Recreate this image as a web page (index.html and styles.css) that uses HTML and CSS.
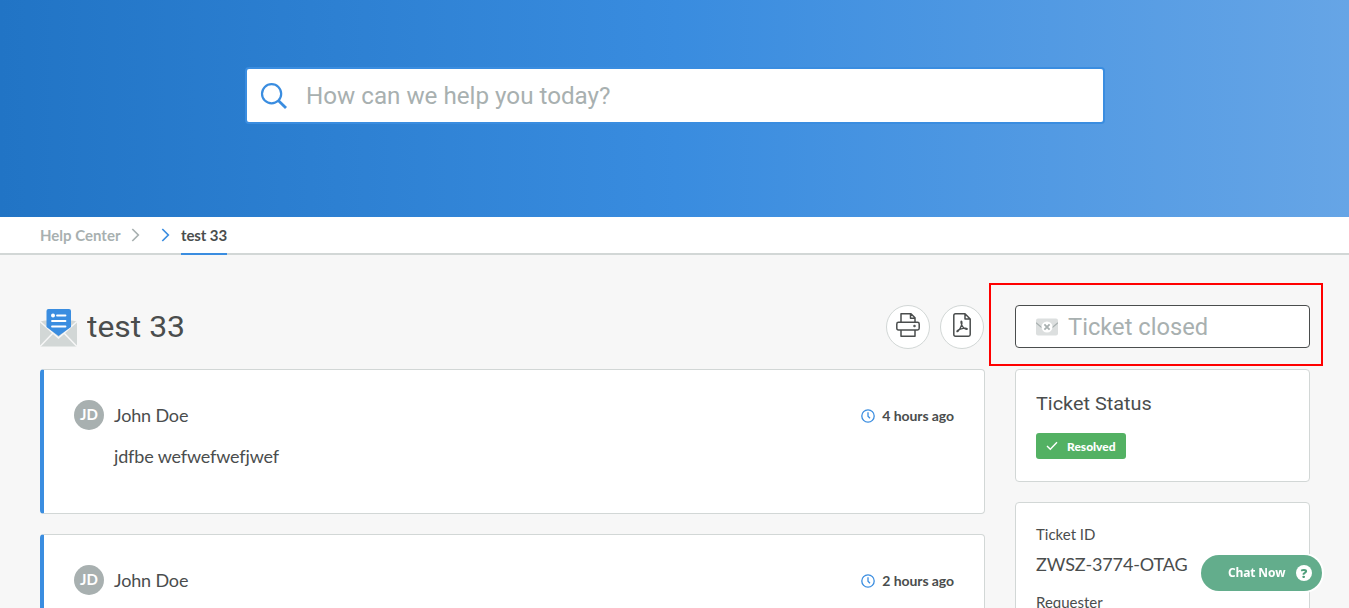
FILE: index.html
```html
<!DOCTYPE html>
<html lang="en">
<head>
<meta charset="utf-8">
<title>test 33 - Help Center</title>
<link rel="stylesheet" href="styles.css">
</head>
<body>
<header class="hero">
  <div class="search">
    <svg class="search-icon" width="28" height="28" viewBox="0 0 28 28" fill="none" stroke="#3a8de0" stroke-width="2.2"><circle cx="11.6" cy="11.7" r="9.6"/><path d="M18.3 18.5L26 26" stroke-width="2.8"/></svg>
    <span class="search-text">How can we help you today?</span>
  </div>
</header>
<nav class="crumbs">
  <a class="crumb">Help Center</a>
  <svg class="chev" width="9" height="14" viewBox="0 0 9 14" fill="none" stroke="#a8b0b0" stroke-width="1.7"><path d="M1.3 1L7.3 7L1.3 13"/></svg>
  <svg class="chev chev-active" width="9" height="14" viewBox="0 0 9 14" fill="none" stroke="#3a8de0" stroke-width="1.7"><path d="M1.3 1L7.3 7L1.3 13"/></svg>
  <a class="crumb current">test 33</a>
</nav>
<main class="content">
  <section class="thread">
    <div class="title-row">
      <svg class="mail" width="37" height="38" viewBox="0 0 37 38"><path fill="#d2d7d6" d="M0 12.5L5 11.5H32L37 12.5V37.5H0Z"/><path d="M0 12.5L18.5 29L37 12.5M0 37.5L13 24M37 37.5L24 24" fill="none" stroke="#f7f7f7" stroke-width="1.5"/><path fill="#3a8de0" d="M6.5 2Q6.5 0 8.5 0H29Q31 0 31 2V18L18.5 27L6.5 18Z"/><circle cx="13" cy="6.5" r="2" fill="#fff"/><path d="M17 6.5H25.5M12 12H25.5M12 17.5H25.5" stroke="#fff" stroke-width="1.8" stroke-linecap="round"/></svg>
      <h1 class="title">test 33</h1>
      <a class="round"><svg width="24" height="24" viewBox="0 0 24 24" fill="none" stroke="#4a4d4d" stroke-width="1.5" stroke-linejoin="round"><path d="M5 9V.8H15L19 4.8V9M14.5 1V5.2H19M5 17H2.5Q.8 17 .8 15.3V11Q.8 9.3 2.5 9.3H21.5Q23.2 9.3 23.2 11V15.3Q23.2 17 21.5 17H19M5 17V23.2H19V17M5 17H19"/><circle cx="18.5" cy="13" r=".5"/></svg></a>
      <a class="round"><svg width="18" height="24" viewBox="0 0 18 24" fill="none" stroke="#4a4d4d" stroke-width="1.5" stroke-linejoin="round" stroke-linecap="round"><path d="M2.5.8H12L17.2 6V21.5Q17.2 23.2 15.5 23.2H2.5Q.8 23.2.8 21.5V2.5Q.8.8 2.5.8ZM12 1V6H17"/><path stroke-width="1.3" d="M8.3 8.2C9.7 8.6 8.8 12 7.5 14.5C6 17.5 4.2 19.5 3.9 18.4C3.6 17.3 7.5 15.8 10.5 15.4C13 15 14.6 15.4 14.2 16.1C13.5 17 10.5 15.5 9 12.5C8 10.5 7.7 8.5 8.3 8.2Z"/></svg></a>
    </div>
    <article class="card message">
      <div class="avatar">JD</div>
      <div class="body"><div class="name">John Doe</div><p class="text">jdfbe wefwefwefjwef</p></div>
      <div class="time"><svg width="14" height="14" viewBox="0 0 14 14" fill="none" stroke="#3a8de0" stroke-width="1.3"><circle cx="7" cy="7" r="6.2"/><path d="M7 3.3V7.3L9 9.3"/></svg><span>4 hours ago</span></div>
    </article>
    <article class="card message">
      <div class="avatar">JD</div>
      <div class="body"><div class="name">John Doe</div></div>
      <div class="time"><svg width="14" height="14" viewBox="0 0 14 14" fill="none" stroke="#3a8de0" stroke-width="1.3"><circle cx="7" cy="7" r="6.2"/><path d="M7 3.3V7.3L9 9.3"/></svg><span>2 hours ago</span></div>
    </article>
  </section>
  <aside class="side">
    <div class="closed">
      <svg width="22" height="18" viewBox="0 0 22 18"><rect y=".5" width="22" height="17" rx="2" fill="#dcdfdf"/><path d="M0 4.8L6 9.7M22 4.8L16 9.7" stroke="#a8b0b0" stroke-width="1.2"/><circle cx="11" cy="9" r="5.5" fill="#fff"/><path d="M8.4 6.4L13.6 11.6M13.6 6.4L8.4 11.6" stroke="#a8b0b0" stroke-width="1.8"/></svg>
      <span class="closed-text">Ticket closed</span>
      <div class="highlight"></div>
    </div>
    <section class="card status">
      <h2 class="status-title">Ticket Status</h2>
      <span class="badge"><svg width="12" height="10" viewBox="0 0 12 10" fill="none" stroke="#fff" stroke-width="1.4"><path d="M1 5L4.3 8.2L11 1.3"/></svg><span class="badge-text">Resolved</span></span>
    </section>
    <section class="card details">
      <div class="label">Ticket ID</div>
      <div class="value">ZWSZ-3774-OTAG</div>
      <div class="label">Requester</div>
    </section>
  </aside>
</main>
<button class="chat"><span>Chat Now</span><i class="help">?</i></button>
</body>
</html>
```

FILE: styles.css
```css
* { box-sizing: border-box; }
body { margin: 0; height: 608px; overflow: hidden; background: #f7f7f7; color: #4a4d4d; font-family: Lato, sans-serif; }
h1, h2, p { margin: 0; font-weight: 400; }
svg { display: block; flex: none; }
.hero { height: 217px; padding-top: 67px; background: linear-gradient(90deg, #2174c5 0%, #398cdf 50%, #66a5e6 100%); }
.search { width: 860px; height: 57px; margin-left: 245px; padding-left: 13px; display: flex; align-items: center; background: #fff; border: 2px solid #3a8de0; border-radius: 4px; }
.search-text { margin: 2px 0 0 18px; font: 23px/30px Roboto, sans-serif; color: #a8b0b0; white-space: nowrap; transform: scaleX(1.052); transform-origin: left; }
.crumbs { height: 38px; padding-left: 40px; display: flex; align-items: center; background: #fff; border-bottom: 2px solid #d2d7d6; }
.crumb { height: 38px; margin-top: 2px; font-size: 15px; line-height: 36px; font-weight: 700; color: #a8b0b0; white-space: nowrap; }
.chev { margin-left: 11px; }
.chev-active { margin-left: 21px; }
.current { margin-left: 10.5px; color: #4a4d4d; border-bottom: 2px solid #3a8de0; letter-spacing: -.1px; }
.content { padding: 50px 39px 0 40px; display: flex; gap: 30px; }
.thread { width: 945px; flex: none; }
.side { width: 295px; flex: none; }
.title-row { height: 44px; margin-bottom: 20px; display: flex; align-items: center; }
.mail { margin-top: 1px; }
.title { flex: 1; margin-left: 10px; font: 29px/44px Roboto, sans-serif; transform: scaleX(1.1); transform-origin: left; }
.round { position: relative; width: 44px; height: 44px; margin-left: 10px; display: flex; align-items: center; justify-content: center; padding-bottom: 4px; background: #fff; border: 1px solid #d2d7d6; border-radius: 50%; }
.round:last-child { margin-right: 1px; }
.card { background: #fff; border: 1px solid #d2d7d6; border-radius: 4px; }
.message { height: 145px; margin-bottom: 20px; padding: 30px; display: flex; border-left: 4px solid #3a8de0; }
.avatar { width: 30px; height: 30px; border-radius: 50%; background: #a8b0b0; color: #fff; font-size: 15px; line-height: 29px; font-weight: 700; text-align: center; }
.body { flex: 1; margin-left: 10px; font-size: 18px; line-height: 30px; letter-spacing: -.15px; }
.text { margin-top: 11px; }
.time { height: 30px; padding-top: 1px; display: flex; gap: 7px; align-items: center; font-size: 14px; font-weight: 700; letter-spacing: -.08px; }
.closed { position: relative; height: 43px; padding-left: 20px; display: flex; align-items: center; background: #fff; border: 1px solid #4a4d4d; border-radius: 4px; color: #a8b0b0; }
.closed-text { margin: 2px 0 0 10px; font: 23px/40px Roboto, sans-serif; transform: scaleX(1.03); transform-origin: left; }
.highlight { position: absolute; left: -27px; top: -23px; width: 334px; height: 83px; border: 2px solid #f00; }
.status { height: 113px; margin-top: 21px; padding: 20px; }
.status-title { font: 19px/28px Roboto, sans-serif; transform: scaleX(1.045); transform-origin: left; }
.badge { width: 90px; height: 26px; margin-top: 15px; padding-left: 10px; display: flex; align-items: center; gap: 9px; border-radius: 3px; background: #53b163; color: #fff; }
.badge-text { font-size: 12px; font-weight: 900; }
.details { margin-top: 20px; padding: 19px 20px; }
.label { font-size: 15px; line-height: 24px; }
.value { margin: 3px 0 11px; font-size: 18px; line-height: 30px; letter-spacing: -.12px; }
.chat { position: fixed; left: 1201px; top: 555px; width: 121px; height: 36px; padding: 0 10px 0 27px; display: flex; align-items: center; justify-content: space-between; border: 0; border-radius: 18px; background: #63ad8c; box-shadow: 0 0 0 2px rgba(255, 255, 255, .9); color: #fff; font: 700 12px/36px "Open Sans", sans-serif; letter-spacing: -.15px; white-space: nowrap; }
.help { width: 16px; height: 16px; border-radius: 50%; background: #fff; color: #4f9f7b; font: 800 13px/16px "Open Sans", sans-serif; text-align: center; }
```
